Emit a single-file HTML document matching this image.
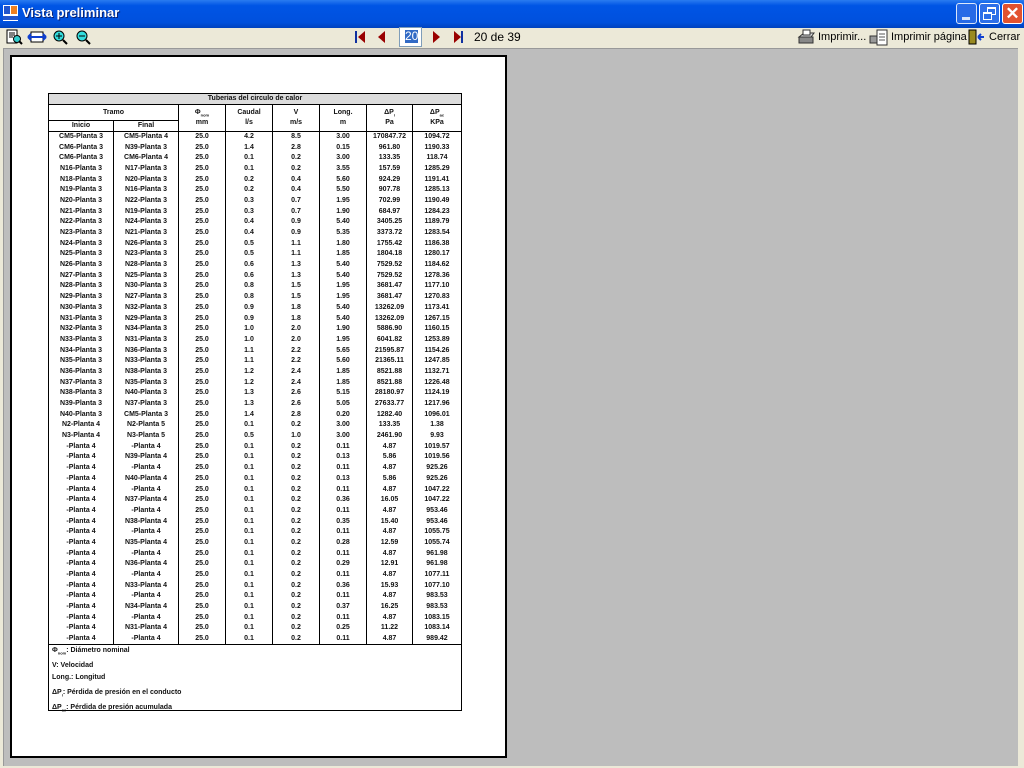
<!DOCTYPE html>
<html><head><meta charset="utf-8"><style>
*{margin:0;padding:0;box-sizing:border-box}
body{width:1024px;height:768px;overflow:hidden;background:#ECE9D8;font-family:"Liberation Sans",sans-serif;position:relative}
#title{position:absolute;left:0;top:0;width:1024px;height:28px;background:linear-gradient(#2A7BF0,#0055E5 20%,#0050DD 80%,#0042BE);}
#title .t{position:absolute;left:22px;top:5px;color:#fff;font-weight:bold;font-size:13px;text-shadow:1px 1px #0a1f6a}
.wb{position:absolute;top:3px;width:21px;height:21px;border:1px solid #fff;border-radius:3px;background:#2E6FE8}
.abs{position:absolute}
#gray{position:absolute;left:3px;top:48px;width:1015px;height:718px;background:#BDBDBD;border-top:1px solid #999;border-left:1px solid #999}
#page{position:absolute;left:10px;top:55px;width:497px;height:703px;background:#fff;border:2px solid #000}
table{position:absolute;left:48px;top:93px;width:414px;border-collapse:collapse;font-size:7px;font-weight:bold;color:#111}
td{border-left:1px solid #000;border-right:1px solid #000;text-align:center;height:10.7px;line-height:10px;padding:0;white-space:nowrap}
.h td{border:1px solid #000}
sub{line-height:0;font-size:4px}
.tb{font-size:11px;color:#000}
#leg{position:absolute;left:48px;top:644px;width:414px;height:67px;border:1px solid #000;border-top:none;font-size:7px;font-weight:bold;color:#111;padding:2px 3px}
#leg div{height:15px;line-height:10px}
</style></head><body>
<div id="title">
<div class="abs" style="left:3px;top:5px;width:15px;height:16px;background:#fff"><div style="position:absolute;left:1px;top:1px;width:6px;height:8px;background:#2255cc"></div><div style="position:absolute;left:8px;top:1px;width:6px;height:8px;background:#f08020"></div><div style="position:absolute;left:0;top:11px;width:15px;height:4px;background:#2255cc"></div></div>
<div class="t">Vista preliminar</div>
<div class="wb" style="left:956px;opacity:.85"><div class="abs" style="left:5px;top:13px;width:8px;height:3px;background:#fff"></div></div>
<div class="wb" style="left:979px"><div class="abs" style="left:7px;top:3px;width:9px;height:8px;border:1px solid #fff;border-top-width:2px"></div><div class="abs" style="left:3px;top:8px;width:9px;height:8px;border:1px solid #fff;border-top-width:2px;background:#2E6FE8"></div></div>
<div class="wb" style="left:1002px;background:#E2522F;color:#fff;font-size:17px;font-weight:bold;text-align:center;line-height:19px">✕</div>
</div>
<svg class="abs" style="left:4px;top:28px" width="100" height="20">
<rect x="3" y="2" width="10" height="13" fill="#fff" stroke="#000"/><path d="M5 5h6M5 7h6M5 9h4" stroke="#000"/><circle cx="13" cy="11" r="3.5" fill="#3cc" stroke="#000"/><path d="M15 13l3 3" stroke="#000" stroke-width="2"/>
<rect x="27" y="4" width="12" height="10" fill="#fff" stroke="#000"/><path d="M24 9h18M24 9l3-3M24 9l3 3M42 9l-3-3M42 9l-3 3" stroke="#1040d0" stroke-width="2"/>
<circle cx="55" cy="8" r="5" fill="#3dd" stroke="#000"/><path d="M52 8h6M55 5v6" stroke="#000"/><path d="M59 12l4 4" stroke="#000" stroke-width="2"/>
<circle cx="78" cy="8" r="5" fill="#3dd" stroke="#000"/><path d="M75 8h6" stroke="#000"/><path d="M82 12l4 4" stroke="#000" stroke-width="2"/>
</svg>
<svg class="abs" style="left:352px;top:29px" width="115" height="16">
<rect x="3" y="2" width="2" height="12" fill="#1030a0"/><path d="M13 2L6 8l7 6z" fill="#900"/>
<path d="M33 2l-7 6 7 6z" fill="#900"/>
<path d="M81 2l7 6-7 6z" fill="#900"/>
<path d="M102 2l7 6-7 6z" fill="#900"/><rect x="109" y="2" width="2" height="12" fill="#1030a0"/>
</svg>
<div class="abs" style="left:399px;top:27px;width:23px;height:20px;background:#fff;border:1px solid #7F9DB9"><span style="position:absolute;left:5px;top:2px;background:#316AC5;color:#fff;font-size:12px;line-height:13px">20</span></div>
<div class="abs" style="left:474px;top:30px;font-size:12px">20 de 39</div>
<svg class="abs" style="left:797px;top:28px" width="20" height="18"><path d="M2 9l5-4h10l-3 4z" fill="#ddd" stroke="#333"/><rect x="2" y="9" width="14" height="6" fill="#888" stroke="#333"/><rect x="6" y="2" width="7" height="5" fill="#fff" stroke="#333"/></svg>
<div class="abs tb" style="left:818px;top:31px">Imprimir...</div>
<svg class="abs" style="left:869px;top:28px" width="20" height="18"><rect x="1" y="8" width="10" height="7" fill="#999" stroke="#333"/><rect x="8" y="2" width="10" height="15" fill="#fff" stroke="#333"/><path d="M10 6h6M10 9h6M10 12h6" stroke="#555"/></svg>
<div class="abs tb" style="left:891px;top:31px">Imprimir página</div>
<svg class="abs" style="left:967px;top:28px" width="20" height="18"><rect x="2" y="2" width="7" height="14" fill="#9a8a20" stroke="#000"/><path d="M17 9h-6M11 9l3-3M11 9l3 3" stroke="#1040d0" stroke-width="2"/></svg>
<div class="abs tb" style="left:989px;top:31px">Cerrar</div>
<div id="gray"></div>
<div id="page"></div>
<table>
<tr class="h"><td colspan="8" style="background:#DCDCDC;height:11px">Tuberias del circulo de calor</td></tr>
<tr class="h"><td colspan="2" style="width:130px;height:16px">Tramo</td><td rowspan="2" style="width:47px">Φ<sub>nom</sub><br>mm</td><td rowspan="2" style="width:47px">Caudal<br>l/s</td><td rowspan="2" style="width:47px">V<br>m/s</td><td rowspan="2" style="width:47px">Long.<br>m</td><td rowspan="2" style="width:46px">ΔP<sub>i</sub><br>Pa</td><td rowspan="2">ΔP<sub>ac</sub><br>KPa</td></tr>
<tr class="h"><td style="width:65px;height:11px">Inicio</td><td style="width:65px">Final</td></tr>
<tr><td>CM5-Planta 3</td><td>CM5-Planta 4</td><td>25.0</td><td>4.2</td><td>8.5</td><td>3.00</td><td>170847.72</td><td>1094.72</td></tr>
<tr><td>CM6-Planta 3</td><td>N39-Planta 3</td><td>25.0</td><td>1.4</td><td>2.8</td><td>0.15</td><td>961.80</td><td>1190.33</td></tr>
<tr><td>CM6-Planta 3</td><td>CM6-Planta 4</td><td>25.0</td><td>0.1</td><td>0.2</td><td>3.00</td><td>133.35</td><td>118.74</td></tr>
<tr><td>N16-Planta 3</td><td>N17-Planta 3</td><td>25.0</td><td>0.1</td><td>0.2</td><td>3.55</td><td>157.59</td><td>1285.29</td></tr>
<tr><td>N18-Planta 3</td><td>N20-Planta 3</td><td>25.0</td><td>0.2</td><td>0.4</td><td>5.60</td><td>924.29</td><td>1191.41</td></tr>
<tr><td>N19-Planta 3</td><td>N16-Planta 3</td><td>25.0</td><td>0.2</td><td>0.4</td><td>5.50</td><td>907.78</td><td>1285.13</td></tr>
<tr><td>N20-Planta 3</td><td>N22-Planta 3</td><td>25.0</td><td>0.3</td><td>0.7</td><td>1.95</td><td>702.99</td><td>1190.49</td></tr>
<tr><td>N21-Planta 3</td><td>N19-Planta 3</td><td>25.0</td><td>0.3</td><td>0.7</td><td>1.90</td><td>684.97</td><td>1284.23</td></tr>
<tr><td>N22-Planta 3</td><td>N24-Planta 3</td><td>25.0</td><td>0.4</td><td>0.9</td><td>5.40</td><td>3405.25</td><td>1189.79</td></tr>
<tr><td>N23-Planta 3</td><td>N21-Planta 3</td><td>25.0</td><td>0.4</td><td>0.9</td><td>5.35</td><td>3373.72</td><td>1283.54</td></tr>
<tr><td>N24-Planta 3</td><td>N26-Planta 3</td><td>25.0</td><td>0.5</td><td>1.1</td><td>1.80</td><td>1755.42</td><td>1186.38</td></tr>
<tr><td>N25-Planta 3</td><td>N23-Planta 3</td><td>25.0</td><td>0.5</td><td>1.1</td><td>1.85</td><td>1804.18</td><td>1280.17</td></tr>
<tr><td>N26-Planta 3</td><td>N28-Planta 3</td><td>25.0</td><td>0.6</td><td>1.3</td><td>5.40</td><td>7529.52</td><td>1184.62</td></tr>
<tr><td>N27-Planta 3</td><td>N25-Planta 3</td><td>25.0</td><td>0.6</td><td>1.3</td><td>5.40</td><td>7529.52</td><td>1278.36</td></tr>
<tr><td>N28-Planta 3</td><td>N30-Planta 3</td><td>25.0</td><td>0.8</td><td>1.5</td><td>1.95</td><td>3681.47</td><td>1177.10</td></tr>
<tr><td>N29-Planta 3</td><td>N27-Planta 3</td><td>25.0</td><td>0.8</td><td>1.5</td><td>1.95</td><td>3681.47</td><td>1270.83</td></tr>
<tr><td>N30-Planta 3</td><td>N32-Planta 3</td><td>25.0</td><td>0.9</td><td>1.8</td><td>5.40</td><td>13262.09</td><td>1173.41</td></tr>
<tr><td>N31-Planta 3</td><td>N29-Planta 3</td><td>25.0</td><td>0.9</td><td>1.8</td><td>5.40</td><td>13262.09</td><td>1267.15</td></tr>
<tr><td>N32-Planta 3</td><td>N34-Planta 3</td><td>25.0</td><td>1.0</td><td>2.0</td><td>1.90</td><td>5886.90</td><td>1160.15</td></tr>
<tr><td>N33-Planta 3</td><td>N31-Planta 3</td><td>25.0</td><td>1.0</td><td>2.0</td><td>1.95</td><td>6041.82</td><td>1253.89</td></tr>
<tr><td>N34-Planta 3</td><td>N36-Planta 3</td><td>25.0</td><td>1.1</td><td>2.2</td><td>5.65</td><td>21595.87</td><td>1154.26</td></tr>
<tr><td>N35-Planta 3</td><td>N33-Planta 3</td><td>25.0</td><td>1.1</td><td>2.2</td><td>5.60</td><td>21365.11</td><td>1247.85</td></tr>
<tr><td>N36-Planta 3</td><td>N38-Planta 3</td><td>25.0</td><td>1.2</td><td>2.4</td><td>1.85</td><td>8521.88</td><td>1132.71</td></tr>
<tr><td>N37-Planta 3</td><td>N35-Planta 3</td><td>25.0</td><td>1.2</td><td>2.4</td><td>1.85</td><td>8521.88</td><td>1226.48</td></tr>
<tr><td>N38-Planta 3</td><td>N40-Planta 3</td><td>25.0</td><td>1.3</td><td>2.6</td><td>5.15</td><td>28180.97</td><td>1124.19</td></tr>
<tr><td>N39-Planta 3</td><td>N37-Planta 3</td><td>25.0</td><td>1.3</td><td>2.6</td><td>5.05</td><td>27633.77</td><td>1217.96</td></tr>
<tr><td>N40-Planta 3</td><td>CM5-Planta 3</td><td>25.0</td><td>1.4</td><td>2.8</td><td>0.20</td><td>1282.40</td><td>1096.01</td></tr>
<tr><td>N2-Planta 4</td><td>N2-Planta 5</td><td>25.0</td><td>0.1</td><td>0.2</td><td>3.00</td><td>133.35</td><td>1.38</td></tr>
<tr><td>N3-Planta 4</td><td>N3-Planta 5</td><td>25.0</td><td>0.5</td><td>1.0</td><td>3.00</td><td>2461.90</td><td>9.93</td></tr>
<tr><td>-Planta 4</td><td>-Planta 4</td><td>25.0</td><td>0.1</td><td>0.2</td><td>0.11</td><td>4.87</td><td>1019.57</td></tr>
<tr><td>-Planta 4</td><td>N39-Planta 4</td><td>25.0</td><td>0.1</td><td>0.2</td><td>0.13</td><td>5.86</td><td>1019.56</td></tr>
<tr><td>-Planta 4</td><td>-Planta 4</td><td>25.0</td><td>0.1</td><td>0.2</td><td>0.11</td><td>4.87</td><td>925.26</td></tr>
<tr><td>-Planta 4</td><td>N40-Planta 4</td><td>25.0</td><td>0.1</td><td>0.2</td><td>0.13</td><td>5.86</td><td>925.26</td></tr>
<tr><td>-Planta 4</td><td>-Planta 4</td><td>25.0</td><td>0.1</td><td>0.2</td><td>0.11</td><td>4.87</td><td>1047.22</td></tr>
<tr><td>-Planta 4</td><td>N37-Planta 4</td><td>25.0</td><td>0.1</td><td>0.2</td><td>0.36</td><td>16.05</td><td>1047.22</td></tr>
<tr><td>-Planta 4</td><td>-Planta 4</td><td>25.0</td><td>0.1</td><td>0.2</td><td>0.11</td><td>4.87</td><td>953.46</td></tr>
<tr><td>-Planta 4</td><td>N38-Planta 4</td><td>25.0</td><td>0.1</td><td>0.2</td><td>0.35</td><td>15.40</td><td>953.46</td></tr>
<tr><td>-Planta 4</td><td>-Planta 4</td><td>25.0</td><td>0.1</td><td>0.2</td><td>0.11</td><td>4.87</td><td>1055.75</td></tr>
<tr><td>-Planta 4</td><td>N35-Planta 4</td><td>25.0</td><td>0.1</td><td>0.2</td><td>0.28</td><td>12.59</td><td>1055.74</td></tr>
<tr><td>-Planta 4</td><td>-Planta 4</td><td>25.0</td><td>0.1</td><td>0.2</td><td>0.11</td><td>4.87</td><td>961.98</td></tr>
<tr><td>-Planta 4</td><td>N36-Planta 4</td><td>25.0</td><td>0.1</td><td>0.2</td><td>0.29</td><td>12.91</td><td>961.98</td></tr>
<tr><td>-Planta 4</td><td>-Planta 4</td><td>25.0</td><td>0.1</td><td>0.2</td><td>0.11</td><td>4.87</td><td>1077.11</td></tr>
<tr><td>-Planta 4</td><td>N33-Planta 4</td><td>25.0</td><td>0.1</td><td>0.2</td><td>0.36</td><td>15.93</td><td>1077.10</td></tr>
<tr><td>-Planta 4</td><td>-Planta 4</td><td>25.0</td><td>0.1</td><td>0.2</td><td>0.11</td><td>4.87</td><td>983.53</td></tr>
<tr><td>-Planta 4</td><td>N34-Planta 4</td><td>25.0</td><td>0.1</td><td>0.2</td><td>0.37</td><td>16.25</td><td>983.53</td></tr>
<tr><td>-Planta 4</td><td>-Planta 4</td><td>25.0</td><td>0.1</td><td>0.2</td><td>0.11</td><td>4.87</td><td>1083.15</td></tr>
<tr><td>-Planta 4</td><td>N31-Planta 4</td><td>25.0</td><td>0.1</td><td>0.2</td><td>0.25</td><td>11.22</td><td>1083.14</td></tr>
<tr><td style="border-bottom:1px solid #000">-Planta 4</td><td style="border-bottom:1px solid #000">-Planta 4</td><td style="border-bottom:1px solid #000">25.0</td><td style="border-bottom:1px solid #000">0.1</td><td style="border-bottom:1px solid #000">0.2</td><td style="border-bottom:1px solid #000">0.11</td><td style="border-bottom:1px solid #000">4.87</td><td style="border-bottom:1px solid #000">989.42</td></tr>
</table>
<div id="leg">
<div>Φ<sub>nom</sub>: Diámetro nominal</div>
<div style="height:12px">V: Velocidad</div>
<div>Long.: Longitud</div>
<div>ΔP<sub>i</sub>: Pérdida de presión en el conducto</div>
<div>ΔP<sub>ac</sub>: Pérdida de presión acumulada</div>
</div>
</body></html>
